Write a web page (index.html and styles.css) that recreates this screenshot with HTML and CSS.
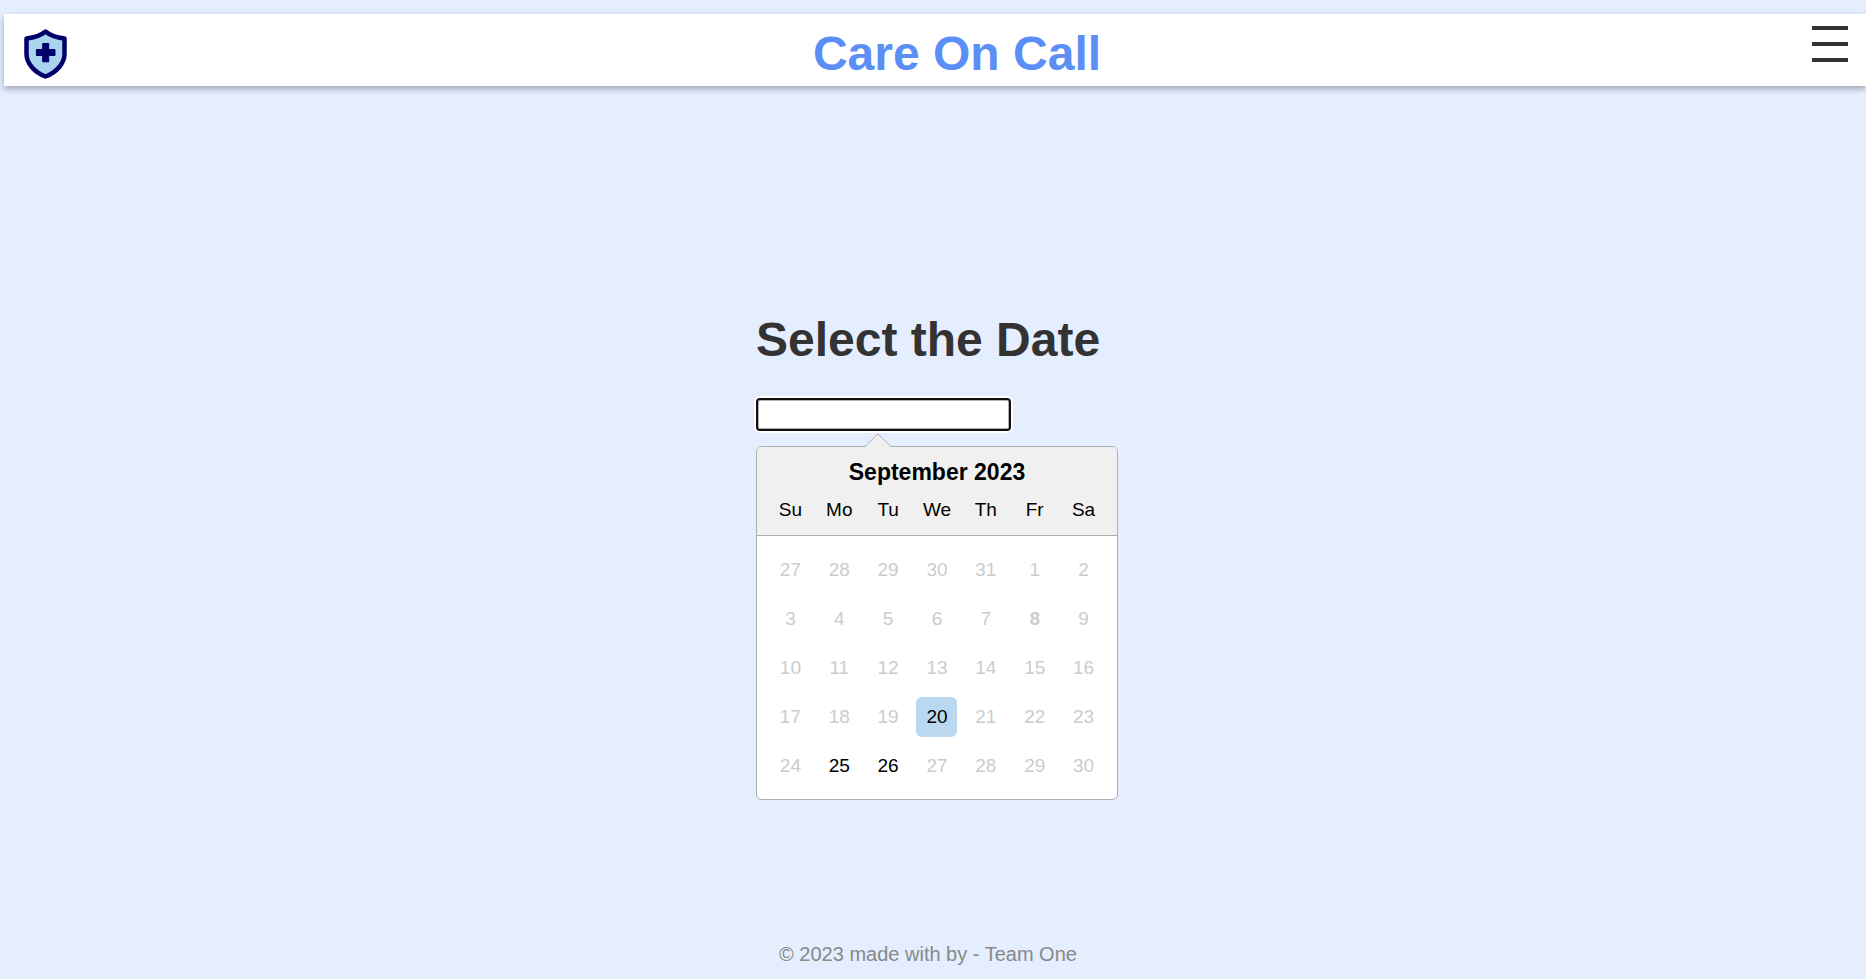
FILE: index.html
```html
<!DOCTYPE html>
<html lang="en">
<head>
<meta charset="utf-8">
<meta name="viewport" content="width=device-width, initial-scale=1">
<title>Care On Call</title>
<link rel="stylesheet" href="styles.css">
</head>
<body>
<header class="topbar">
  <a class="logo" href="#" aria-label="Home">
    <svg width="43" height="50" viewBox="0 0 43 50" aria-hidden="true">
      <path d="M21.500 2.500Q28 8 40.500 9.500V25C40.500 34 33 43 21.500 47.500C10 43 2.500 34 2.500 25V9.500Q15 8 21.500 2.500Z" fill="#aad3ee" stroke="#00006b" stroke-width="4.500" stroke-linejoin="round"/>
      <path d="M18.700 14.500h6v6h6.300v6h-6.300v6.300h-6v-6.300h-6.300v-6h6.300z" fill="#00006b" stroke="#00006b" stroke-linejoin="round"/>
    </svg>
  </a>
  <h1 class="brand">Care On Call</h1>
  <button class="menu" type="button" aria-label="Open menu"><span class="bar"></span><span class="bar"></span><span class="bar"></span></button>
</header>
<main class="booking">
  <h2 class="heading"><label for="date">Select the Date</label></h2>
  <input class="date-input" id="date" type="text">
  <section class="calendar" aria-label="September 2023">
    <svg class="pointer" width="26" height="14" viewBox="0 0 26 14" aria-hidden="true"><path d="M0 14V12.500L12 .8Q13 0 14 .8L26 12.500V14Z" fill="#f0f0f0"/><path d="M0 12.500L12 .8Q13 0 14 .8L26 12.500" fill="none" stroke="#aeaeae"/></svg>
    <div class="calendar-head">
      <h3 class="month">September 2023</h3>
      <div class="weekdays"><span>Su</span><span>Mo</span><span>Tu</span><span>We</span><span>Th</span><span>Fr</span><span>Sa</span></div>
    </div>
    <div class="days">
      <button class="day" disabled>27</button><button class="day" disabled>28</button><button class="day" disabled>29</button><button class="day" disabled>30</button><button class="day" disabled>31</button><button class="day" disabled>1</button><button class="day" disabled>2</button>
      <button class="day" disabled>3</button><button class="day" disabled>4</button><button class="day" disabled>5</button><button class="day" disabled>6</button><button class="day" disabled>7</button><button class="day today" disabled>8</button><button class="day" disabled>9</button>
      <button class="day" disabled>10</button><button class="day" disabled>11</button><button class="day" disabled>12</button><button class="day" disabled>13</button><button class="day" disabled>14</button><button class="day" disabled>15</button><button class="day" disabled>16</button>
      <button class="day" disabled>17</button><button class="day" disabled>18</button><button class="day" disabled>19</button><button class="day selected">20</button><button class="day" disabled>21</button><button class="day" disabled>22</button><button class="day" disabled>23</button>
      <button class="day" disabled>24</button><button class="day">25</button><button class="day">26</button><button class="day" disabled>27</button><button class="day" disabled>28</button><button class="day" disabled>29</button><button class="day" disabled>30</button>
    </div>
  </section>
</main>
<footer class="footer">© 2023 made with by - Team One</footer>
</body>
</html>
```
FILE: styles.css
```css
* {
  box-sizing: border-box;
}

body {
  margin: 0;
  min-height: 100vh;
  display: flex;
  flex-direction: column;
  background: #e4eeff;
  color: #333;
  font-family: "Liberation Sans", Arial, sans-serif;
}

.topbar {
  display: flex;
  align-items: flex-start;
  height: 72px;
  margin: 14px 0 0 4px;
  background: #fff;
  box-shadow: 0 3px 6px rgba(0, 0, 0, 0.3);
}

.logo {
  flex: 0 0 102px;
  padding: 15px 0 0 20px;
}

.logo svg {
  display: block;
}

.brand {
  flex: 1;
  margin: 0;
  padding-top: 12px;
  color: #5b8ff5;
  font-size: 48px;
  line-height: 56px;
  text-align: center;
}

.menu {
  display: flex;
  flex-direction: column;
  gap: 12px;
  width: 36px;
  margin: 12px 18px 0 4px;
  padding: 0;
  border: 0;
  background: none;
}

.bar {
  width: 100%;
  height: 4px;
  background: #333;
}

.booking {
  align-self: center;
  width: 362px;
  margin: 226px 0 40px 8px;
}

.heading {
  margin: 0 0 30px;
  font-size: 48px;
  line-height: 56px;
}

.date-input {
  display: block;
  width: 255px;
  height: 33px;
  margin-bottom: 15px;
  padding: 0 6px;
  border: 2px solid #101010;
  border-radius: 4px;
  outline: 0;
  background: #fff;
  box-shadow: 0 0 0 2px #fff, inset 0 0 0 1px #b0b0b0;
  font: 19px "Liberation Sans", Arial, sans-serif;
}

.calendar {
  position: relative;
  border: 1px solid #aeaeae;
  border-radius: 6px;
  background: #fff;
  color: #000;
}

.pointer {
  position: absolute;
  top: -13px;
  left: 108px;
}

.calendar-head {
  padding: 12px 9px 9px;
  border-bottom: 1px solid #aeaeae;
  border-radius: 5px 5px 0 0;
  background: #f0f0f0;
}

.month {
  margin: 0;
  font-size: 23px;
  line-height: 26px;
  text-align: center;
}

.weekdays,
.days {
  display: grid;
  grid-template-columns: repeat(7, 1fr);
  font-size: 19px;
  text-align: center;
}

.weekdays {
  padding-top: 9px;
  line-height: 32px;
}

.days {
  grid-auto-rows: 49px;
  place-items: center;
  padding: 9px;
}

.day {
  width: 41px;
  height: 40px;
  padding: 0;
  border: 0;
  border-radius: 6px;
  background: none;
  color: #000;
  font: inherit;
}

.day:disabled {
  color: #ccc;
}

.today {
  font-weight: bold;
}

.selected {
  background: #bad9f1;
}

.footer {
  margin-top: auto;
  padding: 0 10px 13px 0;
  color: #888;
  font-size: 20px;
  line-height: 24px;
  text-align: center;
}
```
